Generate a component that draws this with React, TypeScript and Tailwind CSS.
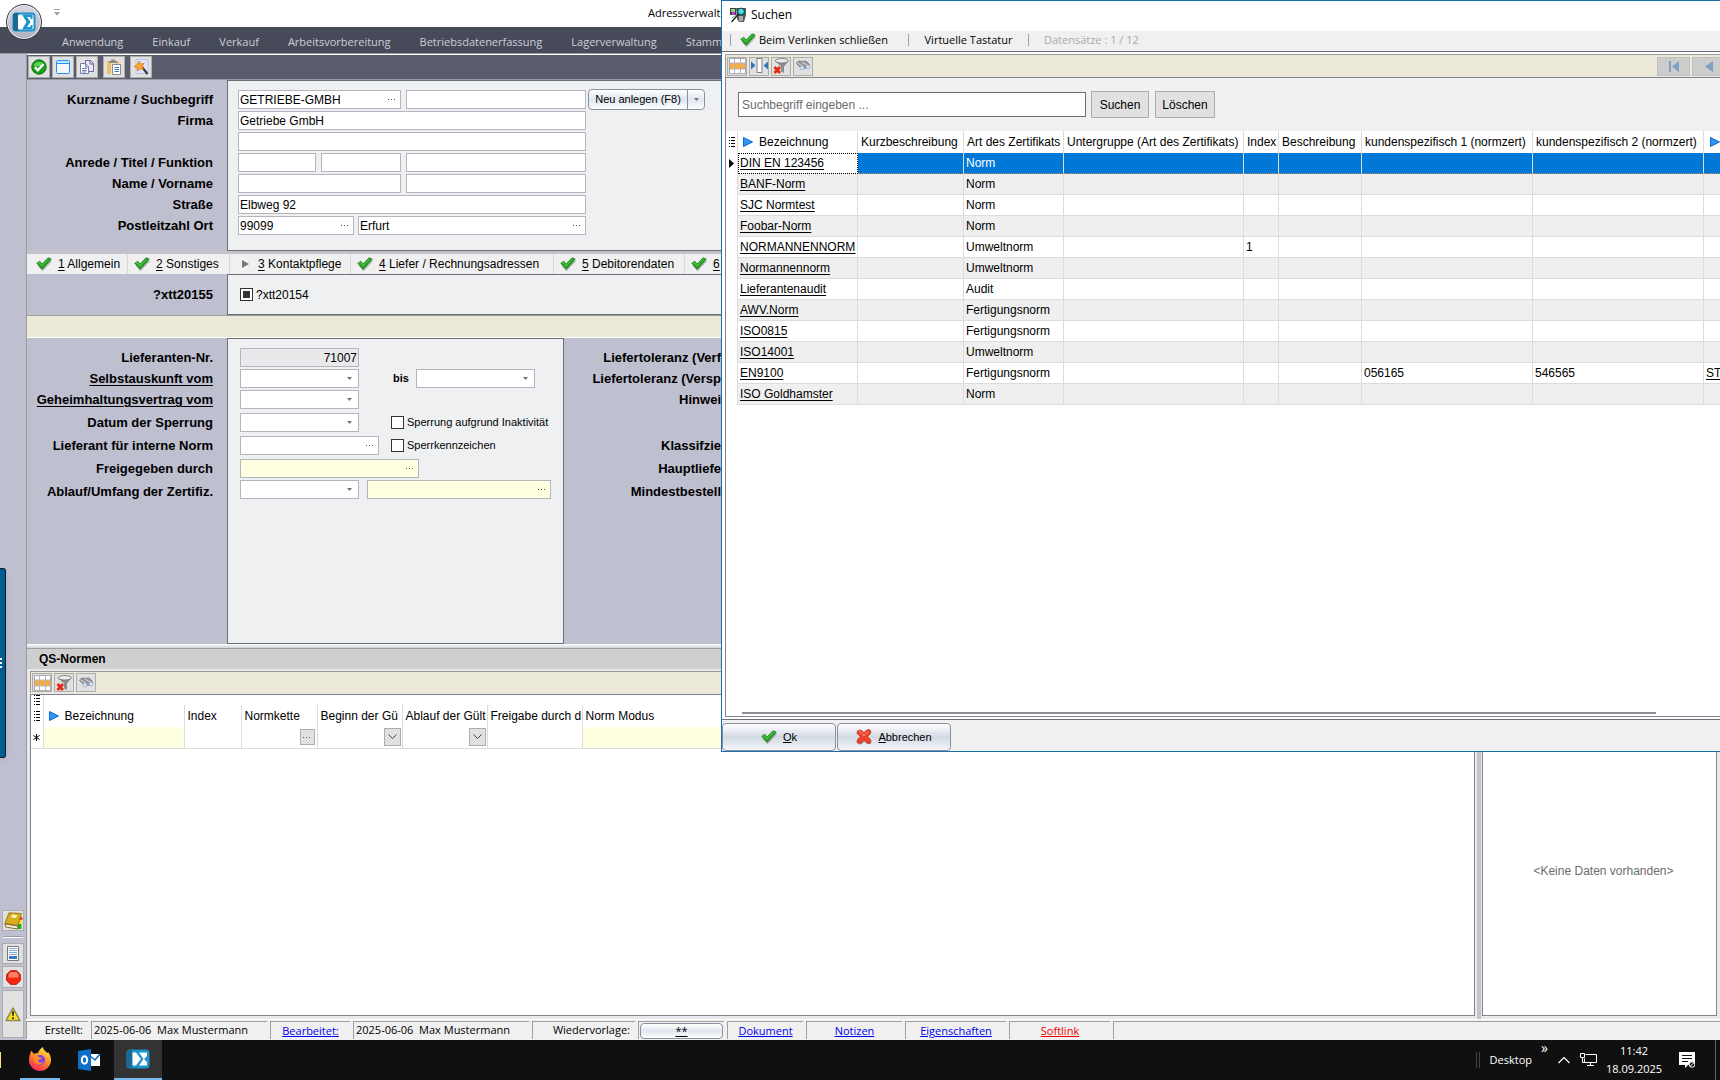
import type { ReactNode } from "react";

const menuItems = [
  "Anwendung",
  "Einkauf",
  "Verkauf",
  "Arbeitsvorbereitung",
  "Betriebsdatenerfassung",
  "Lagerverwaltung",
  "Stamm",
];

const tabs = [
  { nr: "1", title: "Allgemein", done: true, width: "w-[98px]" },
  { nr: "2", title: "Sonstiges", done: true, width: "w-[102px]" },
  { nr: "3", title: "Kontaktpflege", done: false, width: "w-[121px]" },
  { nr: "4", title: "Liefer / Rechnungsadressen", done: true, width: "w-[203px]" },
  { nr: "5", title: "Debitorendaten", done: true, width: "w-[131px]" },
  { nr: "6", title: "", done: true, width: "w-[98px]" },
];

const norms = [
  { name: "DIN EN 123456", type: "Norm" },
  { name: "BANF-Norm", type: "Norm" },
  { name: "SJC Normtest", type: "Norm" },
  { name: "Foobar-Norm", type: "Norm" },
  { name: "NORMANNENNORM", type: "Umweltnorm", index: "1" },
  { name: "Normannennorm", type: "Umweltnorm" },
  { name: "Lieferantenaudit", type: "Audit" },
  { name: "AWV.Norm", type: "Fertigungsnorm" },
  { name: "ISO0815", type: "Fertigungsnorm" },
  { name: "ISO14001", type: "Umweltnorm" },
  { name: "EN9100", type: "Fertigungsnorm", k1: "056165", k2: "546565", k3: "ST" },
  { name: "ISO Goldhamster", type: "Norm" },
];

/* ---------- icons ---------- */

const CheckIcon = () => (
  <svg width="16" height="14" viewBox="0 0 16 14" className="shrink-0">
    <path d="M2.5 8 6.5 12.5 15 3.500" stroke="#8a8a8a" strokeWidth="2.500" fill="none" opacity=".6" />
    <path d="M.8 6.2 3.8 4.200 6 7.200 12 .8 15.200 2 6.200 12.200Z" fill="#22a321" stroke="#14801a" strokeWidth=".8" />
    <path d="M2 6.200 3.400 5.600 6 9 12.600 1.800" stroke="#5fd052" fill="none" />
  </svg>
);

const CrossIcon = () => (
  <svg width="16" height="16" viewBox="0 0 16 16" className="shrink-0">
    <path d="M3 14.500c3 1 4-1 6-4 1 3 3 5 6 3" stroke="#8a8a8a" strokeWidth="1.500" fill="none" opacity=".6" />
    <path d="M1.500 2C4 .5 6.500 1 8 4.500 9 1.500 11.500 0 14 1c1.500 2 .5 4.500-2.500 6.500 3 2.500 4 4.500 3 6.500-2.500 1-5 0-6.500-3.500-1.500 3.500-4 4.500-6.500 3.500-1-2 0-4 3-6.500C1.500 5.500.5 4 1.500 2Z" fill="#f0432c" stroke="#b32415" strokeWidth=".8" />
    <path d="M3 2.500c2 0 4 3 5 4.500 1-2 3-4 4.500-4.500" stroke="#ff9a80" fill="none" />
  </svg>
);

const OkIcon = () => (
  <svg width="16" height="16" viewBox="0 0 16 16">
    <circle cx="8" cy="8" r="7.200" fill="#14a014" stroke="#0b6e10" />
    <path d="M2.500 6a6 5 0 0 1 11 0c-3 2-8 2-11 0Z" fill="#62cf55" />
    <path d="m3.800 8.200 3 3 5.600-6" stroke="#fff" strokeWidth="2.400" fill="none" />
  </svg>
);

const WindowIcon = () => (
  <svg width="16" height="16" viewBox="0 0 16 16">
    <rect x="1.500" y="1.500" width="13" height="13" rx="1" fill="#f3f7fd" stroke="#1e90ff" />
    <path d="M2 4.500h12" stroke="#1e90ff" />
    <path d="M2 3h12" stroke="#9fd0ff" />
  </svg>
);

const CopyIcon = () => (
  <svg width="16" height="16" viewBox="0 0 16 16">
    <path d="M6.500 1.500h5l3 3v8h-8z" fill="#e9e6f7" stroke="#7461a5" />
    <path d="M11 1v4h4" fill="none" stroke="#7461a5" />
    <path d="M1.500 4.500h5l3 3v7h-8z" fill="#fff" stroke="#6c80ab" />
    <path d="M6.500 4.500v3.500h3M3 9.500h5M3 11.500h5M3 13h4" fill="none" stroke="#6c80ab" />
  </svg>
);

const PasteIcon = () => (
  <svg width="16" height="16" viewBox="0 0 16 16">
    <path d="M1 2h4v13H1zM10 2h3v3h-3z" fill="#f3c065" />
    <path d="M3 2h8v2H3zM5 .5h4V2H5z" fill="#8b8b8b" />
    <path d="M6.500 5.500h8v10h-8z" fill="#fff" stroke="#8a8a8a" />
    <path d="M8.500 8.500h4.500M8.500 10.500h4.500M8.500 12.500h4.500" stroke="#2f7fc4" />
  </svg>
);

const WandIcon = () => (
  <svg width="16" height="16" viewBox="0 0 16 16">
    <path d="M3 .5h12v14H3z" fill="#dbe6fa" stroke="#b6c4e4" />
    <path d="m9 8 5.500 7" stroke="#3c3c3c" strokeWidth="2.200" />
    <path d="m6 2 1.500 3 3.500-.5-2 3 1.500 3-3.300-.6L4.500 12l-.4-3.400L1 7.500l3-1.400Z" fill="#ffa62b" stroke="#d96e0c" strokeWidth=".7" />
  </svg>
);

const GridIcon = () => (
  <svg width="17" height="16" viewBox="0 0 17 16">
    <path d="M.500.500h16v15H.500z" fill="#fff" stroke="#a9a9b8" />
    <path d="M1 5h15v6H1z" fill="#fbad3c" />
    <path d="M5.500 1v14M11.500 1v14M1 5h15M1 11h15" stroke="#b9b3bf" />
  </svg>
);

const FitIcon = () => (
  <svg width="17" height="16" viewBox="0 0 17 16">
    <path d="M6 .5h5v14H6z" fill="#fff" stroke="#7f7f7f" />
    <path d="m0 3.500 4.500 4-4.500 4zM17 3.500l-4.500 4 4.500 4z" fill="#2f77b8" />
  </svg>
);

const FilterIcon = () => (
  <svg width="17" height="16" viewBox="0 0 17 16">
    <path d="M2 3 8 8.500v5l3 1.500V8.500L15.500 3Z" fill="#8d8d8d" />
    <ellipse cx="8.800" cy="2.800" rx="6.600" ry="2.200" fill="#ededed" stroke="#6d6d6d" strokeWidth=".8" />
    <path d="m1.500 9 5.500 6M7 9l-5.500 6" stroke="#e22b17" strokeWidth="2.800" />
  </svg>
);

const BinocularsIcon = () => (
  <svg width="17" height="16" viewBox="0 0 17 16">
    <path d="M1.500 5.500 3.500 3 7 3.500 11 3l3.500 3.500-1 4-4-.5-3 .5Z" fill="#96989b" stroke="#6a6c6f" strokeWidth=".7" />
    <path d="m2.500 5 5 3M7 4l6 3.500" stroke="#dcdcdc" />
    <circle cx="7" cy="9.800" r="2" fill="#d9ecfa" stroke="#8ba0b4" strokeWidth=".7" />
    <circle cx="13" cy="9" r="2" fill="#d9ecfa" stroke="#8ba0b4" strokeWidth=".7" />
  </svg>
);

const PlayIcon = () => (
  <svg width="10" height="10" viewBox="0 0 10 10" className="shrink-0">
    <path d="M.5.500 9.500 5l-9 4.500Z" fill="#2d95f5" stroke="#1169c9" />
  </svg>
);

const RowsIcon = () => (
  <svg width="6" height="10" viewBox="0 0 6 10">
    <path d="M2 .5h4M2 3.500h4M2 6.500h4M2 9.500h4M0 .5h1M0 3.500h1M0 6.500h1M0 9.500h1" stroke="#000" />
  </svg>
);

const AppLogo = () => (
  <svg width="24" height="20" viewBox="0 0 24 20">
    <rect x=".5" y=".5" width="23" height="19" rx="3.500" fill="#1c93cc" />
    <path d="M1 4a3 3 0 0 1 3-3h2v18H4a3 3 0 0 1-3-3Z" fill="#1b6a95" />
    <path d="M6.500 3.500h3.500L15 10l-5 6.500H6.500Z" fill="#fff" />
    <path d="M13 3.500h8V7l-3 3 3 3v3.500h-8L17.500 10Z" fill="#fff" />
  </svg>
);

const OrbLogo = () => (
  <svg width="24" height="20" viewBox="0 0 24 20">
    <rect x=".5" y=".5" width="23" height="19" rx="3.500" fill="#1c93cc" />
    <path d="M1 4a3 3 0 0 1 3-3h2v18H4a3 3 0 0 1-3-3Z" fill="#1b6a95" />
    <rect x="6" y="2.500" width="15.500" height="15" rx="1.500" fill="#fff" />
    <path d="M10 2.500h10.500V7h-2V5H15l3.500 5-3.500 5h3.500v-2h2v4.500H10l4.500-7.500Z" fill="#1c93cc" />
  </svg>
);

const Arrow = ({ className = "" }: { className?: string }) => (
  <svg width="5" height="3" viewBox="0 0 5 3" className={className}>
    <path d="M0 0h5L2.500 3Z" fill="#70747a" />
  </svg>
);

const Dots = () => (
  <svg width="8" height="1" viewBox="0 0 8 1">
    <path d="M0 0h1v1H0zM3 0h1v1H3zM6 0h1v1H6z" fill="#555" />
  </svg>
);

/* ---------- controls ---------- */

type FieldProps = {
  id: string;
  label?: string;
  value?: string;
  width: string;
  dots?: boolean;
  tone?: string;
  right?: boolean;
};

const Field = ({ id, label, value = "", width, dots, tone = "bg-white", right }: FieldProps) => (
  <div className={`flex h-[19px] items-center border border-[#b3b6bf] ${tone} ${width}`}>
    <input
      id={id}
      aria-label={label}
      defaultValue={value}
      className={`h-full w-full min-w-0 flex-1 bg-transparent px-px text-xs outline-none ${right ? "text-right" : ""}`}
    />
    {dots && (
      <button type="button" aria-label="Auswahl" className="flex h-full w-4 shrink-0 items-center justify-center">
        <Dots />
      </button>
    )}
  </div>
);

const Combo = ({ id, label }: { id: string; label?: string }) => (
  <div className="relative h-[19px] w-[119px]">
    <select id={id} aria-label={label} className="block h-full w-full appearance-none border border-[#b3b6bf] bg-white outline-none">
      <option></option>
    </select>
    <Arrow className="pointer-events-none absolute top-2 right-[7px]" />
  </div>
);

const Check = ({ id, text, small, checked }: { id: string; text: string; small?: boolean; checked?: boolean }) => (
  <div className="flex items-center gap-[3px]">
    <input
      id={id}
      type="checkbox"
      defaultChecked={checked}
      className="h-[13px] w-[13px] appearance-none border border-[#333] bg-white checked:bg-[#333] checked:shadow-[inset_0_0_0_2px_white]"
    />
    <label htmlFor={id} className={small ? "text-[11px]" : "text-xs"}>
      {text}
    </label>
  </div>
);

const ToolButton = ({ label, children, size = "h-[19px] w-5" }: { label: string; children: ReactNode; size?: string }) => (
  <button type="button" aria-label={label} className={`flex shrink-0 items-center justify-center border border-[#adadad] bg-[#e1e1e1] ${size}`}>
    {children}
  </button>
);

const Label = ({ htmlFor, children, underline }: { htmlFor: string; children: ReactNode; underline?: boolean }) => (
  <label
    htmlFor={htmlFor}
    className={`h-[19px] text-right text-[13px] leading-[19px] font-bold whitespace-nowrap ${underline ? "underline underline-offset-2" : ""}`}
  >
    {children}
  </label>
);

/* ---------- main window ---------- */

const TitleAndMenu = () => (
  <header className="relative shrink-0 font-['Open_Sans','Noto_Sans',sans-serif]">
    <div className="flex h-[27px] items-center bg-white pb-0.5 pl-[54px] text-[11px]">
      <svg width="6" height="7" viewBox="0 0 6 7">
        <path d="M0 .5h6" stroke="#9b9cab" />
        <path d="M0 3h6L3 6.500Z" fill="#9b9cab" />
      </svg>
      <span className="pl-[588px] leading-4">Adressverwalt</span>
    </div>
    <nav className="flex h-[27px] items-center gap-[29px] border-b border-[#9a9aa0] bg-[#474a59] pt-1 pl-[62px]">
      {menuItems.map((item) => (
        <button key={item} className="text-[11px] text-[#cdced8]">
          {item}
        </button>
      ))}
    </nav>
    <button
      aria-label="Programm"
      className="absolute top-1 left-1.5 z-10 flex h-9 w-9 items-center justify-center rounded-full border border-[#33353f] bg-linear-to-b from-[#d9dae4] to-[#aeb0c2] shadow-[inset_0_0_0_1px_#eceef4]"
    >
      <OrbLogo />
    </button>
  </header>
);

const SideBar = () => (
  <aside className="relative flex w-[26px] shrink-0 flex-col items-center justify-end bg-[#bebfcf] pb-0.5">
    <div className="absolute top-[514px] left-0 flex h-[190px] w-1.5 items-center rounded-r-[3px] border border-l-0 border-[#0a1b28] bg-[#005c92] shadow-md">
      <svg width="2" height="10" viewBox="0 0 2 10">
        <path d="M0 1h2M0 5h2M0 9h2" stroke="#fff" strokeWidth="2" />
      </svg>
    </div>
    <ToolButton label="Adressbuch" size="h-[21px] w-[22px]">
      <svg width="19" height="18" viewBox="0 0 19 18">
        <path d="M14 5h4.500v3H14z" fill="#f04a1a" />
        <path d="M14 8.500h4v3h-4z" fill="#f5e11c" />
        <path d="M13.500 12h4v5h-4z" fill="#22b32b" />
        <path d="M5 .8 17.500 1.500 14 13.500.8 11.500Z" fill="#d8ad1c" stroke="#8c6a0c" strokeWidth=".8" />
        <path d="m1 12 12.800 2v3L1.500 15Z" fill="#f6f0dc" stroke="#6a4d0c" strokeWidth=".8" />
        <path d="m8 2.500 5 .5-.8 3-5-.5Z" fill="#fff3bf" />
      </svg>
    </ToolButton>
    <div className="my-[5px] h-0.5 w-5 border-b border-white bg-[#9a9aa5]" />
    <ToolButton label="Dokument" size="h-[21px] w-[22px]">
      <svg width="12" height="15" viewBox="0 0 12 15">
        <path d="M.500.500h11v14H.500z" fill="#fff" stroke="#77797c" />
        <path d="M2 2.500h8M2 4.500h8M2 6.500h8M2 8.500h8" stroke="#7ea7d2" />
        <path d="M2 10h8v3H2z" fill="#3d78b8" />
      </svg>
    </ToolButton>
    <div className="h-0.5" />
    <ToolButton label="Stopp" size="h-[22px] w-[22px]">
      <svg width="15" height="15" viewBox="0 0 15 15">
        <path d="M4.500.700h6l3.800 3.800v6l-3.800 3.800h-6L.7 10.500v-6Z" fill="#f5260f" stroke="#b4150a" />
        <path d="M4.500 2h6l2 2.500v3h-10v-3Z" fill="#ff8166" />
      </svg>
    </ToolButton>
    <div className="h-0.5" />
    <ToolButton label="Warnung" size="h-12 w-[22px]">
      <svg width="16" height="15" viewBox="0 0 16 15">
        <path d="M8 1 15 13.500H1Z" fill="#fbe21f" stroke="#8f8757" strokeWidth="1.500" strokeLinejoin="round" />
        <path d="M7 4.500h2L8.500 9h-1zM7.200 10.300h1.600v1.700H7.200z" fill="#111" />
      </svg>
    </ToolButton>
  </aside>
);

const AddressForm = () => (
  <form className="flex h-[171px] shrink-0">
    <div className="flex w-[200px] shrink-0 flex-col gap-0.5 bg-[#bebfcf] pt-2.5 pr-3.5">
      <Label htmlFor="kurzname">Kurzname / Suchbegriff</Label>
      <Label htmlFor="firma">Firma</Label>
      <div className="h-[19px]" />
      <Label htmlFor="anrede">Anrede / Titel / Funktion</Label>
      <Label htmlFor="name">Name / Vorname</Label>
      <Label htmlFor="strasse">Straße</Label>
      <Label htmlFor="plz">Postleitzahl Ort</Label>
    </div>
    <div className="flex flex-1 flex-col gap-0.5 border border-r-0 border-[#6d6f76] bg-[#eff0f2] pt-[9px] pl-2.5">
      <div className="flex h-[19px] items-center gap-[5px]">
        <Field id="kurzname" value="GETRIEBE-GMBH" width="w-[163px]" dots />
        <Field id="suchbegriff" label="Suchbegriff" width="w-[180px]" />
        <div className="-ml-[3px] flex h-[21px] rounded-sm border border-[#8b90a0] bg-linear-to-b from-white via-[#dfe6ee] to-white text-[11px]">
          <button type="button" className="w-[99px] border-r border-[#8b90a0]">
            Neu anlegen (F8)
          </button>
          <button type="button" aria-label="Mehr" className="flex w-4 items-center justify-center">
            <Arrow />
          </button>
        </div>
      </div>
      <Field id="firma" value="Getriebe GmbH" width="w-[348px]" />
      <Field id="firma2" label="Firma Zusatz" width="w-[348px]" />
      <div className="flex gap-[5px]">
        <Field id="anrede" width="w-[78px]" />
        <Field id="titel" label="Titel" width="w-20" />
        <Field id="funktion" label="Funktion" width="w-[180px]" />
      </div>
      <div className="flex gap-[5px]">
        <Field id="name" width="w-[163px]" />
        <Field id="vorname" label="Vorname" width="w-[180px]" />
      </div>
      <Field id="strasse" value="Elbweg 92" width="w-[348px]" />
      <div className="flex gap-1">
        <Field id="plz" value="99099" width="w-[116px]" dots />
        <Field id="ort" label="Ort" value="Erfurt" width="w-[228px]" dots />
      </div>
    </div>
  </form>
);

const TabStrip = () => (
  <div className="flex h-[23px] shrink-0 border-t-[3px] border-[#c4c4c6] bg-[#f0f0f0] pl-[3px] text-xs">
    {tabs.map((tab) => (
      <button key={tab.nr} className={`flex shrink-0 items-center gap-1.5 border-r border-[#d9d9d9] pl-1.5 whitespace-nowrap ${tab.width}`}>
        {tab.done ? (
          <CheckIcon />
        ) : (
          <svg width="16" height="8" viewBox="0 0 16 8">
            <path d="M6 0v8l7-4Z" fill="#777" />
          </svg>
        )}
        <span>
          <u className="underline-offset-2">{tab.nr}</u> {tab.title}
        </span>
      </button>
    ))}
  </div>
);

const SupplierForm = () => (
  <form className="flex h-[306px] shrink-0">
    <div className="flex w-[200px] shrink-0 flex-col bg-[#bebfcf] pt-2.5 pr-3.5">
      <div className="flex flex-col gap-0.5">
        <Label htmlFor="liefnr">Lieferanten-Nr.</Label>
        <Label htmlFor="selbst" underline>Selbstauskunft vom</Label>
        <Label htmlFor="geheim" underline>Geheimhaltungsvertrag vom</Label>
      </div>
      <div className="flex flex-col gap-1 pt-1">
        <Label htmlFor="sperrung">Datum der Sperrung</Label>
        <Label htmlFor="intern">Lieferant für interne Norm</Label>
        <Label htmlFor="freigabe">Freigegeben durch</Label>
        <Label htmlFor="ablauf">Ablauf/Umfang der Zertifiz.</Label>
      </div>
    </div>
    <div className="w-[337px] shrink-0 border border-[#6d6f76] bg-[#eff0f2] pt-[9px] pl-3">
      <div className="flex flex-col gap-0.5">
        <Field id="liefnr" value="71007" width="w-[119px]" tone="bg-[#e9e9ec]" right />
        <div className="flex items-center">
          <Combo id="selbst" />
          <label htmlFor="bis" className="w-[57px] pr-[7px] text-right text-[11px] font-bold">
            bis
          </label>
          <Combo id="bis" />
        </div>
        <Combo id="geheim" />
      </div>
      <div className="flex flex-col gap-1 pt-1">
        <div className="flex items-center gap-8">
          <Combo id="sperrung" />
          <Check id="inaktiv" text="Sperrung aufgrund Inaktivität" small />
        </div>
        <div className="flex items-center gap-3">
          <Field id="intern" width="w-[139px]" dots />
          <Check id="kennz" text="Sperrkennzeichen" small />
        </div>
        <div className="flex flex-col gap-0.5">
          <Field id="freigabe" width="w-[179px]" tone="bg-[#ffffe1]" dots />
          <div className="flex gap-2">
            <Combo id="ablauf" />
            <Field id="umfang" label="Umfang" width="w-[184px]" tone="bg-[#ffffe1]" dots />
          </div>
        </div>
      </div>
    </div>
    <div className="flex flex-1 flex-col bg-[#bebfcf] pt-2.5 text-[13px] font-bold">
      <div className="flex w-[157px] flex-col items-end gap-0.5 leading-[19px] whitespace-nowrap">
        <span>Liefertoleranz (Verf</span>
        <span>Liefertoleranz (Versp</span>
        <span>Hinwei</span>
      </div>
      <div className="flex w-[157px] flex-col items-end gap-1 pt-[27px] leading-[19px] whitespace-nowrap">
        <span>Klassifzie</span>
        <span>Hauptliefe</span>
        <span>Mindestbestell</span>
      </div>
    </div>
  </form>
);

const qsHead = "border-r border-[#dcdcdc] py-0 pl-[3px] pr-0 text-left font-normal whitespace-nowrap";

const QsTable = () => (
  <table className="w-full table-fixed border-collapse text-xs">
    <colgroup>
      <col className="w-[12px]" />
      <col className="w-[141px]" />
      <col className="w-[57px]" />
      <col className="w-[76px]" />
      <col className="w-[85px]" />
      <col className="w-[85px]" />
      <col className="w-[95px]" />
      <col />
    </colgroup>
    <thead>
      <tr className="h-[10px]">
        <td className="border-r border-[#dcdcdc] p-0 align-top">
          <div className="flex justify-center"><RowsIcon /></div>
        </td>
        <td colSpan={7} className="p-0"></td>
      </tr>
      <tr className="h-[22px]">
        <td className="border-r border-[#dcdcdc] p-0">
          <div className="flex justify-center"><RowsIcon /></div>
        </td>
        <th className={qsHead}>
          <div className="flex items-center gap-1.5 pl-0.5">
            <PlayIcon /> Bezeichnung
          </div>
        </th>
        <th className={qsHead}>Index</th>
        <th className={qsHead}>Normkette</th>
        <th className={qsHead}>Beginn der Gü</th>
        <th className={qsHead}>Ablauf der Gült</th>
        <th className={qsHead}>Freigabe durch d</th>
        <th className="px-[3px] text-left font-normal">Norm Modus</th>
      </tr>
    </thead>
    <tbody>
      <tr className="h-[21px] border-b border-[#dcdcdc]">
        <td className="border-r border-[#dcdcdc] p-0">
          <svg width="7" height="7" viewBox="0 0 7 7" className="mx-auto">
            <path d="M3.500 0v7M.5 1.500l6 4M6.500 1.500l-6 4" stroke="#000" />
          </svg>
        </td>
        <td className="border-r border-[#dcdcdc] bg-[#ffffe1]"></td>
        <td className="border-r border-[#dcdcdc]"></td>
        <td className="border-r border-[#dcdcdc] p-0 pr-0.5">
          <div className="flex justify-end">
            <ToolButton label="Normkette wählen" size="h-4 w-[15px]"><Dots /></ToolButton>
          </div>
        </td>
        {["Beginn", "Ablauf"].map((col) => (
          <td key={col} className="border-r border-[#dcdcdc] p-0 pr-px">
            <div className="flex justify-end">
              <ToolButton label={col} size="h-[18px] w-[17px]">
                <svg width="9" height="6" viewBox="0 0 9 6"><path d="m.5.500 4 4 4-4" stroke="#444" fill="none" /></svg>
              </ToolButton>
            </div>
          </td>
        ))}
        <td className="border-r border-[#dcdcdc]"></td>
        <td className="bg-[#ffffe1]"></td>
      </tr>
    </tbody>
  </table>
);

const QsSection = () => (
  <section className="flex min-h-0 flex-1 flex-col">
    <div className="h-[5px] shrink-0 border-b border-[#9b9da3] bg-linear-to-b from-white to-[#ccd2da]" />
    <div className="flex min-h-0 flex-1 bg-[#e9e9ec]">
      <div className="flex min-w-0 flex-1 flex-col">
        <h2 className="h-5 shrink-0 bg-[#cfcfcf] pl-3 text-xs leading-[20px] font-bold">QS-Normen</h2>
        <div className="mt-0.5 ml-[3px] flex h-[22px] shrink-0 items-center gap-0.5 border-t border-l border-[#9b9b9b] bg-[#ece9d8] pl-px">
          <ToolButton label="Spalten"><GridIcon /></ToolButton>
          <ToolButton label="Filter löschen"><FilterIcon /></ToolButton>
          <ToolButton label="Suchen"><BinocularsIcon /></ToolButton>
        </div>
        <div className="mt-px mr-0.5 mb-[3px] ml-[3px] min-h-0 flex-1 border border-[#83838f] bg-white">
          <QsTable />
        </div>
      </div>
      <div className="w-1 bg-[#c4c4c8]" />
      <div className="mr-[3px] mb-[3px] ml-px flex w-[235px] items-center justify-center border border-[#83838f] bg-white pt-[76px] pl-2 text-xs text-[#6d6d6d]">
        &lt;Keine Daten vorhanden&gt;
      </div>
    </div>
  </section>
);

const statusCell = "flex h-[18px] items-center border-t border-l border-[#a0a0a0] whitespace-pre";
const statusLink = "pt-0.5 underline";

const StatusBar = () => (
  <footer className="flex h-[21px] shrink-0 items-center gap-[3px] border-t border-white bg-[#f0f0f0] font-['Open_Sans','Noto_Sans',sans-serif] text-[11px]">
    <div className={`${statusCell} w-[62px] justify-end pr-[5px]`}>Erstellt:</div>
    <div className={`${statusCell} w-44 pl-0.5`}>2025-06-06  Max Mustermann</div>
    <div className={`${statusCell} w-20 justify-center`}><a href="#" className={`${statusLink} text-[#0000ee]`}>Bearbeitet:</a></div>
    <div className={`${statusCell} w-44 pl-0.5`}>2025-06-06  Max Mustermann</div>
    <div className={`${statusCell} w-[103px] justify-end pr-[5px]`}>Wiedervorlage:</div>
    <div className={`${statusCell} w-[86px] pl-px`}>
      <button className="h-4 w-[83px] rounded-sm border border-[#8b90a0] bg-linear-to-b from-white via-[#dfe6ee] to-white leading-3 underline">**</button>
    </div>
    <div className={`${statusCell} w-[76px] justify-center`}><a href="#" className={`${statusLink} text-[#0000ee]`}>Dokument</a></div>
    <div className={`${statusCell} w-24 justify-center`}><a href="#" className={`${statusLink} text-[#0000ee]`}>Notizen</a></div>
    <div className={`${statusCell} w-[101px] justify-center`}><a href="#" className={`${statusLink} text-[#0000ee]`}>Eigenschaften</a></div>
    <div className={`${statusCell} w-[101px] justify-center`}><a href="#" className={`${statusLink} text-[#ee0000]`}>Softlink</a></div>
    <div className={`${statusCell} flex-1`}></div>
  </footer>
);

/* ---------- search dialog ---------- */

const cell = "border-r border-b px-0.5 py-0";
const head = "border-r border-[#dcdcdc] py-0 pl-[3px] pr-0 text-left font-normal";

const rowTone = (i: number) => {
  if (i === 0) return "border-[#dcdcdc] border-b-[#c98a4e] [border-bottom-style:dotted] bg-[#0078d7] text-white";
  return i % 2 ? "border-[#dcdcdc] bg-[#efefef]" : "border-[#dcdcdc] bg-white";
};

const SearchTable = () => (
  <table className="w-full table-fixed border-separate border-spacing-0 bg-white text-xs whitespace-nowrap">
    <colgroup>
      <col className="w-[12px]" />
      <col className="w-[120px]" />
      <col className="w-[106px]" />
      <col className="w-[100px]" />
      <col className="w-[180px]" />
      <col className="w-[35px]" />
      <col className="w-[83px]" />
      <col className="w-[171px]" />
      <col className="w-[171px]" />
      <col />
    </colgroup>
    <thead>
      <tr className="h-[22px]">
        <td className="border-r border-[#dcdcdc] p-0"><div className="flex justify-center"><RowsIcon /></div></td>
        <th className={head}>
          <div className="flex items-center gap-1.5 pl-0.5">
            <PlayIcon /> Bezeichnung
          </div>
        </th>
        <th className={head}>Kurzbeschreibung</th>
        <th className={head}>Art des Zertifikats</th>
        <th className={head}>Untergruppe (Art des Zertifikats)</th>
        <th className={head}>Index</th>
        <th className={head}>Beschreibung</th>
        <th className={head}>kundenspezifisch 1 (normzert)</th>
        <th className={head}>kundenspezifisch 2 (normzert)</th>
        <th className="overflow-hidden p-0 pl-1.5"><PlayIcon /></th>
      </tr>
    </thead>
    <tbody>
      {norms.map((n, i) => (
        <tr key={n.name} className="h-[21px]">
          <td className="border-r border-[#dcdcdc] bg-white p-0">
            {i === 0 && (
              <svg width="5" height="9" viewBox="0 0 5 9" className="mx-auto"><path d="M0 0v9l5-4.500Z" fill="#000" /></svg>
            )}
          </td>
          <td className={`${cell} ${i === 0 ? "border-transparent outline-1 -outline-offset-1 outline-black outline-dotted" : rowTone(i)}`}>
            <a href="#" className="underline underline-offset-2">{n.name}</a>
          </td>
          <td className={`${cell} ${rowTone(i)}`}></td>
          <td className={`${cell} ${rowTone(i)}`}>{n.type}</td>
          <td className={`${cell} ${rowTone(i)}`}></td>
          <td className={`${cell} ${rowTone(i)}`}>{n.index}</td>
          <td className={`${cell} ${rowTone(i)}`}></td>
          <td className={`${cell} ${rowTone(i)}`}>{n.k1}</td>
          <td className={`${cell} ${rowTone(i)}`}>{n.k2}</td>
          <td className={`border-b py-0 pr-0 pl-0.5 ${rowTone(i)}`}>
            {n.k3 && <a href="#" className="underline underline-offset-2">{n.k3}</a>}
          </td>
        </tr>
      ))}
    </tbody>
  </table>
);

const dialogButton = "flex h-7 w-[114px] items-center justify-center gap-1.5 rounded-sm border border-[#8b90a0] bg-linear-to-b from-white via-[#d3dae4] to-[#f4f6f9] text-[11px]";

const SearchDialog = () => (
  <div role="dialog" aria-label="Suchen" className="absolute top-0 right-0 left-[721px] z-20 flex h-[752px] flex-col overflow-hidden border border-r-0 border-[#1a6fb0] bg-[#f0f0f0]">
    <div className="flex h-[30px] shrink-0 items-center gap-[5px] bg-white pb-0.5 pl-2 font-['Open_Sans','Noto_Sans',sans-serif] text-xs">
      <svg width="16" height="16" viewBox="0 0 16 16">
        <path d="M0 1h6v7H0z" fill="#3d4440" />
        <path d="M1 2h4v3H1z" fill="#8bd29a" />
        <path d="M2 5h3v3H2z" fill="#e022d8" />
        <path d="M6 1h10v7l-2 7H9L7 12Z" fill="#555b58" />
        <circle cx="11" cy="4.500" r="3.500" fill="#25d6e6" stroke="#1b1b1b" strokeWidth=".8" />
        <path d="m10 4 2-1v2z" fill="#f3ee3c" />
        <path d="M9 9h4v5H9z" fill="#a7aba9" />
        <path d="m8.500 7-7 8" stroke="#111" strokeWidth="1.200" />
        <path d="m7 7-5 4" stroke="#4fc26b" />
      </svg>
      <span className="flex-1">Suchen</span>
    </div>
    <div className="flex h-[20px] shrink-0 items-center pb-0.5 font-['Open_Sans','Noto_Sans',sans-serif] text-[11px]">
      <div className="ml-2 h-3 w-px bg-[#a0a0a0]" />
      <button className="flex w-[177px] items-center gap-[3px] pl-[9px] whitespace-nowrap">
        <CheckIcon /> Beim Verlinken schließen
      </button>
      <div className="h-3 w-px bg-[#a0a0a0]" />
      <button className="w-[119px] whitespace-nowrap">Virtuelle Tastatur</button>
      <div className="h-3 w-px bg-[#a0a0a0]" />
      <span className="pl-[15px] text-[#a8a8a8]">Datensätze : 1 / 12</span>
    </div>
    <div className="flex min-h-0 flex-1 flex-col border-t border-b border-[#6d6f76] bg-white pt-0.5 pb-0.5 pl-[3px]">
      <div className="flex h-[23px] shrink-0 items-center gap-0.5 border-t border-l border-[#9b9b9b] bg-[#ece9d8] pl-px">
        <ToolButton label="Spalten"><GridIcon /></ToolButton>
        <ToolButton label="Spaltenbreite"><FitIcon /></ToolButton>
        <ToolButton label="Filter löschen"><FilterIcon /></ToolButton>
        <ToolButton label="Suchen"><BinocularsIcon /></ToolButton>
        <div className="ml-auto flex gap-0.5">
          <button aria-label="Erster" className="flex h-[19px] w-[33px] items-center justify-center border border-[#bfbfbf] bg-[#ccc]">
            <svg width="10" height="11" viewBox="0 0 10 11"><path d="M0 0h2v11H0zM10 0v11L3 5.500Z" fill="#7fa0c0" /></svg>
          </button>
          <button aria-label="Zurück" className="flex h-[19px] w-7 items-center justify-center border border-r-0 border-[#bfbfbf] bg-[#ccc] pl-1">
            <svg width="8" height="11" viewBox="0 0 8 11"><path d="M8 0v11L0 5.500Z" fill="#7fa0c0" /></svg>
          </button>
        </div>
      </div>
      <div className="flex min-h-0 flex-1 flex-col border border-r-0 border-[#83838f]">
        <div className="flex h-[53px] shrink-0 items-center bg-[#f0f0f0] pl-3">
          <input
            aria-label="Suchbegriff"
            placeholder="Suchbegriff eingeben ..."
            className="h-[25px] w-[348px] border border-[#6e6e6e] bg-white px-[3px] text-xs outline-none placeholder:text-[#6b6b6b]"
          />
          <button className="ml-[5px] h-[27px] w-[58px] border border-[#adadad] bg-[#e1e1e1] text-xs">Suchen</button>
          <button className="ml-1.5 h-[27px] w-[60px] border border-[#adadad] bg-[#e1e1e1] text-xs">Löschen</button>
        </div>
        <SearchTable />
        <div className="mt-auto mr-16 mb-0.5 ml-4 h-0.5 bg-[#8f8f8f]" />
      </div>
    </div>
    <div className="flex h-[31px] shrink-0 items-end gap-px">
      <button className={dialogButton}><CheckIcon /><span><u>O</u>k</span></button>
      <button className={dialogButton}><CrossIcon /><span><u>A</u>bbrechen</span></button>
    </div>
  </div>
);

/* ---------- taskbar ---------- */

const Taskbar = () => (
  <div className="flex h-10 shrink-0 items-center bg-[#101010] font-['Open_Sans','Noto_Sans',sans-serif] text-[11px] text-white">
    <div className="h-4 w-px bg-[#ffe08a]" />
    <button aria-label="Firefox" className="ml-[19px] flex h-full w-10 items-center justify-center border-b-2 border-[#76b9ed]">
      <svg width="24" height="24" viewBox="0 0 24 24">
        <defs>
          <linearGradient id="fox" x1=".8" y1="0" x2=".3" y2="1">
            <stop offset="0" stopColor="#fff04a" />
            <stop offset=".45" stopColor="#ff9328" />
            <stop offset="1" stopColor="#f5245c" />
          </linearGradient>
        </defs>
        <path d="M3 4c1 0 2 2 3 3 1-1 3-1 4-1 1-3 3-5 5-6 0 3 3 4 4 6l1-1c2 2 3 5 3 8a11 11 0 0 1-22 0c0-3 1-6 2-9Z" fill="url(#fox)" />
        <circle cx="12" cy="13" r="5" fill="#7a3ff0" />
        <path d="M5 9c3-1 5 0 6 1l3 1c-1 2-3 1-4 3 1 2 4 2 6 0-1 4-8 5-10 0Z" fill="#ff8a2a" />
      </svg>
    </button>
    <button aria-label="Outlook" className="ml-[5px] flex h-full w-12 items-center justify-center">
      <svg width="24" height="24" viewBox="0 0 24 24">
        <path d="M12 6h11v12H12z" fill="#fff" />
        <path d="m13 8 5 4 5-6" stroke="#0a6cc1" strokeWidth="1.600" fill="none" />
        <path d="M1 3 14 1v22L1 21Z" fill="#0a70c8" />
        <ellipse cx="7.500" cy="12" rx="2.700" ry="3.700" fill="none" stroke="#fff" strokeWidth="2" />
      </svg>
    </button>
    <button aria-label="ERP" className="ml-px flex h-full w-12 items-center justify-center border-b-2 border-[#76b9ed] bg-[#333]">
      <AppLogo />
    </button>
    <div className="ml-auto h-4 w-1 border-x border-[#444]" />
    <span className="pl-2.5">Desktop</span>
    <span className="self-start pl-[9px] text-sm leading-4">»</span>
    <svg width="12" height="8" viewBox="0 0 12 8" className="ml-2.5"><path d="m.5 7 5.500-5.500L11.500 7" stroke="#fff" strokeWidth="1.200" fill="none" /></svg>
    <svg width="17" height="14" viewBox="0 0 17 14" className="ml-2.5">
      <path d="M5.500 1.500h11v8h-12v-4M10.500 9.500v3M7 12.500h7M2.500 5v4.500H5" stroke="#fff" fill="none" />
      <path d="M.500.500h4v4h-4z" stroke="#fff" fill="#101010" />
    </svg>
    <div className="w-[74px] text-center leading-[18px]">
      <div>11:42</div>
      <div>18.09.2025</div>
    </div>
    <svg width="16" height="16" viewBox="0 0 16 16" className="ml-2">
      <path d="M0 0h16v13H9l-3 3v-3H0Z" fill="#fff" />
      <path d="M3 3.500h10M3 6.500h10M3 9.500h6" stroke="#101010" />
      <circle cx="13" cy="12.500" r="2.800" fill="#101010" stroke="#fff" />
      <path d="m11 14.500 4-4" stroke="#fff" />
    </svg>
    <div className="ml-5 h-full w-[5px] border-l border-[#666]" />
  </div>
);

const App = () => {
  return (
    <div className="relative flex h-screen flex-col overflow-hidden bg-[#f0f0f0] font-['Liberation_Sans',Arial,sans-serif] text-black">
      <TitleAndMenu />
      <div className="flex min-h-0 flex-1">
        <SideBar />
        <main className="flex min-w-0 flex-1 flex-col">
          <div className="flex min-h-0 flex-1 flex-col border-l border-[#9a9aa0]">
            <div className="flex h-[26px] shrink-0 items-center border-t border-b border-t-white border-b-[#9a9aa0] bg-[#585c6c] pl-px">
              <div className="flex gap-0.5">
                <ToolButton label="Speichern" size="h-[22px] w-[22px]"><OkIcon /></ToolButton>
                <ToolButton label="Neu" size="h-[22px] w-[22px]"><WindowIcon /></ToolButton>
                <ToolButton label="Kopieren" size="h-[22px] w-[22px]"><CopyIcon /></ToolButton>
              </div>
              <div className="flex gap-[5px] pl-[5px]">
                <ToolButton label="Einfügen" size="h-[22px] w-[22px]"><PasteIcon /></ToolButton>
                <ToolButton label="Assistent" size="h-[22px] w-[22px]"><WandIcon /></ToolButton>
              </div>
            </div>
            <AddressForm />
            <TabStrip />
            <div className="flex h-[41px] shrink-0">
              <div className="flex w-[200px] flex-col justify-center bg-[#bebfcf] pr-3.5">
                <Label htmlFor="xtt">?xtt20155</Label>
              </div>
              <div className="flex flex-1 items-center border border-r-0 border-[#6d6f76] bg-[#eff0f2] pl-3">
                <Check id="xtt" text="?xtt20154" checked />
              </div>
            </div>
            <div className="h-[23px] shrink-0 border-t border-b border-t-[#9a9aa0] border-b-white bg-[#ece9d8]" />
            <SupplierForm />
            <QsSection />
          </div>
          <StatusBar />
        </main>
      </div>
      <Taskbar />
      <SearchDialog />
    </div>
  );
};

export default App;
